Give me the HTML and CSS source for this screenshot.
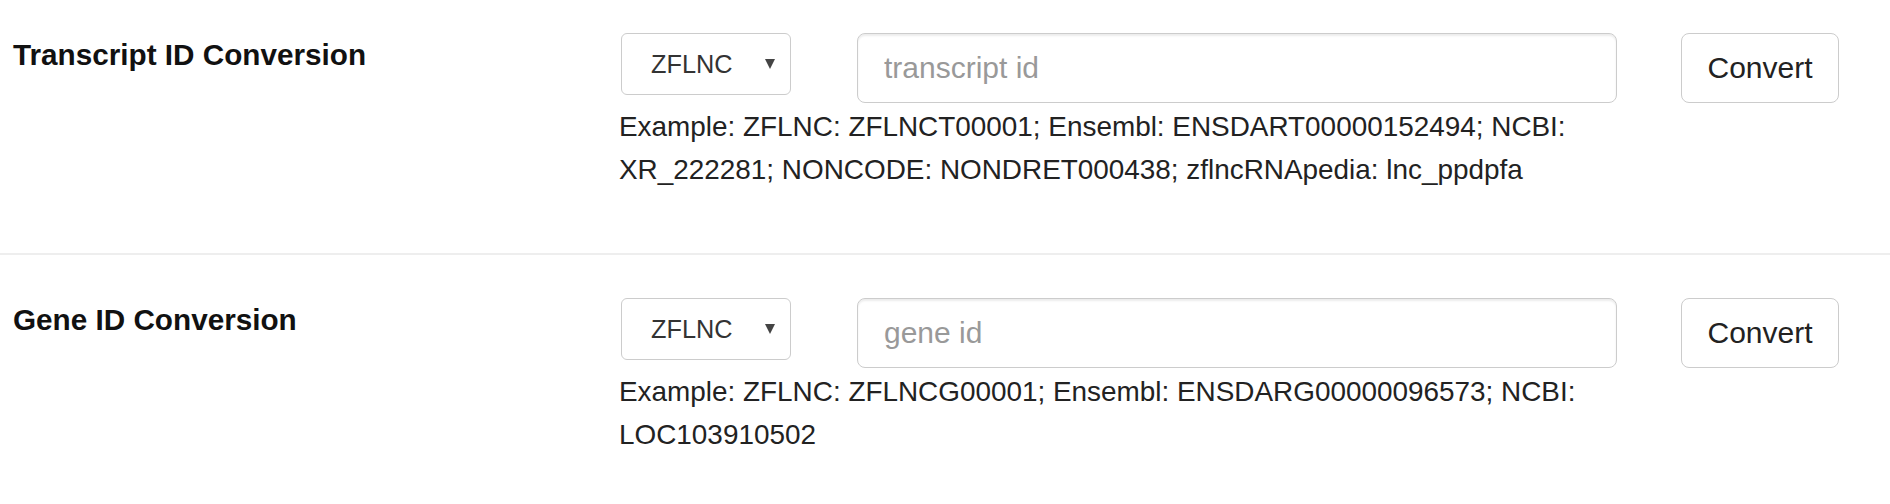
FILE: index.html
```html
<!DOCTYPE html>
<html lang="en">
<head>
<meta charset="utf-8">
<title>ID Conversion</title>
<link rel="stylesheet" href="styles.css">
</head>
<body>
<div class="page">
  <section class="conv-row">
    <div class="conv-label">Transcript ID Conversion</div>
    <div class="conv-main">
      <div class="conv-controls">
        <div class="select"><span>ZFLNC</span><svg class="caret" width="10" height="10" viewBox="0 0 10 10"><polygon points="0,0 10,0 5,10" fill="#444"/></svg></div>
        <input class="text-input" type="text" placeholder="transcript id">
      </div>
      <p class="help">Example: ZFLNC: ZFLNCT00001; Ensembl: ENSDART00000152494; NCBI: XR_222281; NONCODE: NONDRET000438; zflncRNApedia: lnc_ppdpfa</p>
    </div>
    <button class="btn" type="button">Convert</button>
  </section>
  <section class="conv-row">
    <div class="conv-label">Gene ID Conversion</div>
    <div class="conv-main">
      <div class="conv-controls">
        <div class="select"><span>ZFLNC</span><svg class="caret" width="10" height="10" viewBox="0 0 10 10"><polygon points="0,0 10,0 5,10" fill="#444"/></svg></div>
        <input class="text-input" type="text" placeholder="gene id">
      </div>
      <p class="help">Example: ZFLNC: ZFLNCG00001; Ensembl: ENSDARG00000096573; NCBI: LOC103910502</p>
    </div>
    <button class="btn" type="button">Convert</button>
  </section>
</div>
</body>
</html>
```

FILE: styles.css
```css
html, body {
  margin: 0;
  padding: 0;
  background: #fff;
}

body {
  font-family: "Liberation Sans", Arial, Helvetica, sans-serif;
  color: #333;
}

.page {
  width: 1890px;
}

.conv-row {
  display: flex;
  align-items: flex-start;
  padding: 43px 0 62px 13px;
  border-top: 2px solid #eee;
}

.conv-row:first-child {
  padding-top: 33px;
  border-top: none;
}

.conv-label {
  width: 606px;
  flex: none;
  padding-top: 2px;
  font-weight: bold;
  font-size: 29.7px;
  line-height: 39px;
  color: #111;
}

.conv-main {
  width: 998px;
  flex: none;
}

.conv-controls {
  display: flex;
  align-items: flex-start;
  gap: 66px;
}

.select {
  box-sizing: border-box;
  width: 170px;
  height: 62px;
  margin-left: 2px;
  display: flex;
  align-items: center;
  justify-content: space-between;
  padding: 0 15px 0 29px;
  border: 1px solid #ccc;
  border-radius: 6px;
  background: #fff;
  font-size: 25.3px;
  color: #333;
}

.caret {
  display: block;
  flex: none;
}

.text-input {
  box-sizing: border-box;
  width: 760px;
  height: 70px;
  margin: 0;
  padding: 0 26px;
  border: 1px solid #ccc;
  border-radius: 8px;
  box-shadow: inset 0 2px 2px rgba(0, 0, 0, 0.075);
  font-family: "Liberation Sans", Arial, Helvetica, sans-serif;
  font-size: 30px;
  color: #555;
  background: #fff;
  outline: none;
}

.text-input::placeholder {
  color: #999;
}

.help {
  margin: 2px 0 0 0;
  font-size: 27.9px;
  line-height: 43px;
  color: #222;
}

.btn {
  box-sizing: border-box;
  flex: none;
  width: 158px;
  height: 70px;
  margin: 0 0 0 64px;
  padding: 0;
  border: 1px solid #ccc;
  border-radius: 8px;
  background: #fff;
  font-family: "Liberation Sans", Arial, Helvetica, sans-serif;
  font-size: 30px;
  color: #222;
}
```
